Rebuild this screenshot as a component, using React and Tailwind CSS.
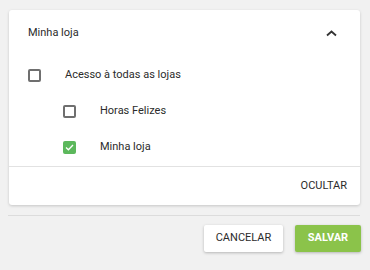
import React from "react";

function Box({ checked }) {
  if (checked) {
    return (
      <div className="w-[13px] h-[13px] rounded-[2px] bg-[#5cb85c] flex items-center justify-center">
        <svg width="9" height="7" viewBox="0 0 9 7" fill="none">
          <path d="M1 3.5 L3.4 5.8 L8 1" stroke="#fff" strokeWidth="1.3" />
        </svg>
      </div>
    );
  }
  return <div className="w-[13px] h-[13px] rounded-[2px] border-2 border-[#6f6f6f] bg-white" />;
}

export default function App() {
  return (
    <div className="w-[370px] h-[270px] bg-[#f1f1f1] overflow-hidden text-[#2b2b2b]" style={{ fontFamily: "Roboto, sans-serif" }}>
      <div className="pt-[10px] pl-[9px]">
        <div className="w-[351px] bg-white rounded-[3px] shadow-[0_1px_3px_rgba(0,0,0,0.18)]">
          <div className="h-[47px] flex items-center justify-between pl-[19px] pr-[23px] text-[11px]">
            <span>Minha loja</span>
            <svg width="11" height="7" viewBox="0 0 11 7" fill="none">
              <path d="M1 5.5 L5.5 1.5 L10 5.5" stroke="#333" strokeWidth="1.8" />
            </svg>
          </div>
          <div className="flex flex-col text-[11px]">
            <div className="h-[36px] flex items-center pl-[19px]">
              <Box />
              <span className="ml-[24px]">Acesso à todas as lojas</span>
            </div>
            <div className="h-[36px] flex items-center pl-[54px]">
              <Box />
              <span className="ml-[24px]">Horas Felizes</span>
            </div>
            <div className="h-[36px] flex items-center pl-[54px]">
              <Box checked />
              <span className="ml-[24px]">Minha loja</span>
            </div>
          </div>
          <div className="h-px bg-[#e2e2e2] mt-px" />
          <div className="h-[38px] flex items-center justify-end pr-[13px] text-[11px]">OCULTAR</div>
        </div>
        <div className="h-px bg-[#dcdcdc] w-[352px] -ml-px mt-[10px]" />
        <div className="flex justify-end gap-[12px] mt-[9px] w-[352px]">
          <button className="h-[27px] w-[79px] bg-white text-[11px] text-[#2b2b2b] rounded-[2px] shadow-[0_1px_3px_rgba(0,0,0,0.25)]">CANCELAR</button>
          <button className="h-[27px] w-[66px] bg-[#8bc34a] text-[11px] font-bold text-white rounded-[2px] shadow-[0_1px_3px_rgba(0,0,0,0.25)]">SALVAR</button>
        </div>
      </div>
    </div>
  );
}
